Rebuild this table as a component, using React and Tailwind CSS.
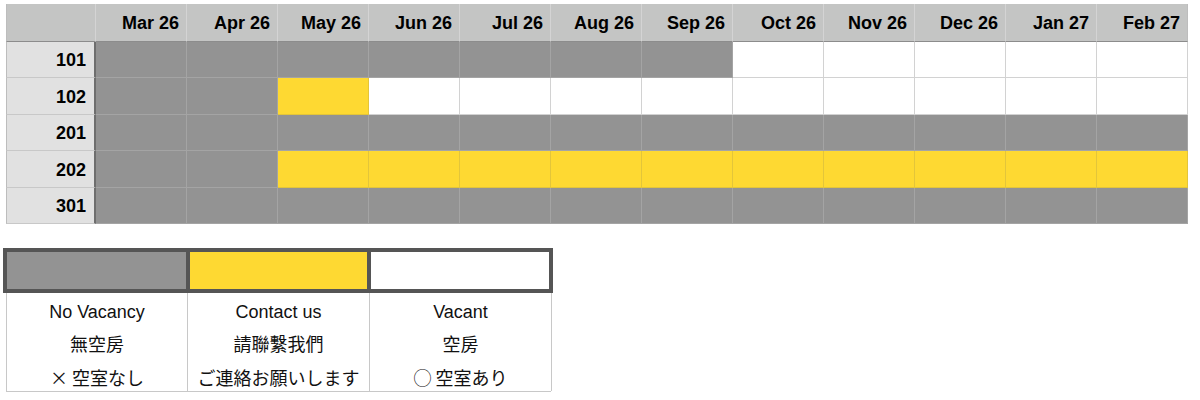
import React from "react";

const months = ["Mar 26","Apr 26","May 26","Jun 26","Jul 26","Aug 26","Sep 26","Oct 26","Nov 26","Dec 26","Jan 27","Feb 27"];
const G = "g", Y = "y", W = "w";
const rows = [
  ["101", [G,G,G,G,G,G,G,W,W,W,W,W], "h-[36px]"],
  ["102", [G,G,Y,W,W,W,W,W,W,W,W,W], "h-[37px]"],
  ["201", [G,G,G,G,G,G,G,G,G,G,G,G], "h-[36px]"],
  ["202", [G,G,Y,Y,Y,Y,Y,Y,Y,Y,Y,Y], "h-[37px]"],
  ["301", [G,G,G,G,G,G,G,G,G,G,G,G], "h-[36px]"],
];

const cellCls = {
  g: "bg-[#939393] border-r border-b border-[#a4a4a4]",
  y: "bg-[#fed932] border-r border-b border-[#e3c53a]",
  w: "bg-white border-r border-b border-[#d2d2d2]",
};

const font = { fontFamily: '"Liberation Sans", Arial, sans-serif' };
const cjk = { fontFamily: '"Liberation Sans", Arial, "Noto Sans CJK TC", sans-serif' };
const cjkJp = { fontFamily: '"Noto Sans CJK JP", "Liberation Sans", sans-serif' };

export default function App() {
  return (
    <div className="w-[1200px] h-[400px] bg-white pt-[4px] pl-[6px] text-black" style={font}>
      <div className="grid grid-cols-[90px_repeat(12,91px)] w-[1182px]">
        <div className="h-[38px] bg-[#c4c5c4] border-l border-[#bdbdbd] border-b border-b-[#8c8c8c] border-r border-r-[#d4d4d4]" />
        {months.map((m, i) => (
          <div key={m} className={"h-[38px] bg-[#c4c5c4] border-b border-b-[#8c8c8c] flex items-center justify-end pr-[7px] pt-[2px] text-[18px] font-bold " + (i === 11 ? "border-r border-r-[#bdbdbd]" : "border-r border-r-[#d4d4d4]")}>
            {m}
          </div>
        ))}
        {rows.map(([label, cells, h]) => (
          <React.Fragment key={label}>
            <div className={h + " bg-[#e1e1e1] border-l border-[#bdbdbd] border-b border-b-[#c8c8c8] border-r-2 border-r-[#6e6e6e] flex items-center justify-end pr-[8px] pt-[2px] text-[18px] font-bold"}>
              {label}
            </div>
            {cells.map((c, i) => (
              <div key={i} className={h + " " + cellCls[c]} />
            ))}
          </React.Fragment>
        ))}
      </div>

      <div className="mt-[24px] -ml-[3px] w-[550px]">
        <div className="flex h-[45px] border-4 border-[#555555]">
          <div className="w-[179px] bg-[#939393]" />
          <div className="w-[181px] bg-[#fed932] border-l-4 border-[#555555]" />
          <div className="flex-1 bg-white border-l-4 border-[#555555]" />
        </div>
        <div className="ml-[3px] w-[545px] grid grid-cols-[181px_182px_182px] border-l border-b border-[#c8c8c8] text-[18px] text-[#111]">
          {[
            ["No Vacancy", "無空房", "× 空室なし"],
            ["Contact us", "請聯繫我們", "ご連絡お願いします"],
            ["Vacant", "空房", "◯ 空室あり"],
          ].map((col, i) => (
            <div key={i} className="border-r border-[#c8c8c8] flex flex-col items-center pt-[8px] pb-[3px]">
              <div className="h-[33px] leading-[22px]" style={font}>{col[0]}</div>
              <div className="h-[32px] leading-[22px]" style={cjk}>{col[1]}</div>
              <div className="h-[22px] leading-[22px]" style={cjkJp}>{col[2]}</div>
            </div>
          ))}
        </div>
      </div>
    </div>
  );
}
